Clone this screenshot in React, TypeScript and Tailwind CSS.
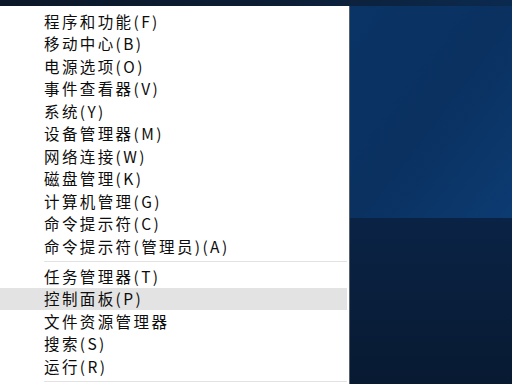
import React from "react";

const group1 = [
  "程序和功能(F)",
  "移动中心(B)",
  "电源选项(O)",
  "事件查看器(V)",
  "系统(Y)",
  "设备管理器(M)",
  "网络连接(W)",
  "磁盘管理(K)",
  "计算机管理(G)",
  "命令提示符(C)",
  "命令提示符(管理员)(A)",
];
const group2 = ["任务管理器(T)", "控制面板(P)", "文件资源管理器", "搜索(S)", "运行(R)"];

function Item({ label, active }: { label: string; active?: boolean }) {
  return (
    <div
      className={
        "h-[22.5px] flex items-center pl-[44px] mr-[2px] text-[15.5px] tracking-[2.4px] text-[#0d0d0d] " +
        (active ? "bg-[#e3e3e3]" : "")
      }
    >
      <span className="leading-none">{label}</span>
    </div>
  );
}

function Sep() {
  return (
    <div className="h-[7.5px] flex items-center pl-[44px] mr-[2px]">
      <div className="h-px w-full bg-[#e2e2e2]" />
    </div>
  );
}

export default function App() {
  return (
    <div
      className="w-[512px] h-[384px] overflow-hidden flex flex-col bg-[#0a1d38]"
      style={{ fontFamily: '"Microsoft YaHei", "Noto Sans CJK SC", "Noto Sans", sans-serif' }}
    >
      <div className="h-[6px] shrink-0 bg-gradient-to-r from-[#0c1829] via-[#0c1d33] to-[#0b2a4f]" />
      <div className="flex flex-1">
        <div className="w-[350px] shrink-0 bg-white border-r border-[#5a5f68] pt-[4px]">
          {group1.map((l) => (
            <Item key={l} label={l} />
          ))}
          <Sep />
          {group2.map((l) => (
            <Item key={l} label={l} active={l === "控制面板(P)"} />
          ))}
          <Sep />
        </div>
        <div className="flex-1 flex flex-col">
          <div className="h-[212px] bg-gradient-to-br from-[#0a3466] via-[#0a3160] to-[#0c3b72]" />
          <div className="flex-1 bg-gradient-to-b from-[#0a2345] to-[#081a32]" />
        </div>
      </div>
    </div>
  );
}
